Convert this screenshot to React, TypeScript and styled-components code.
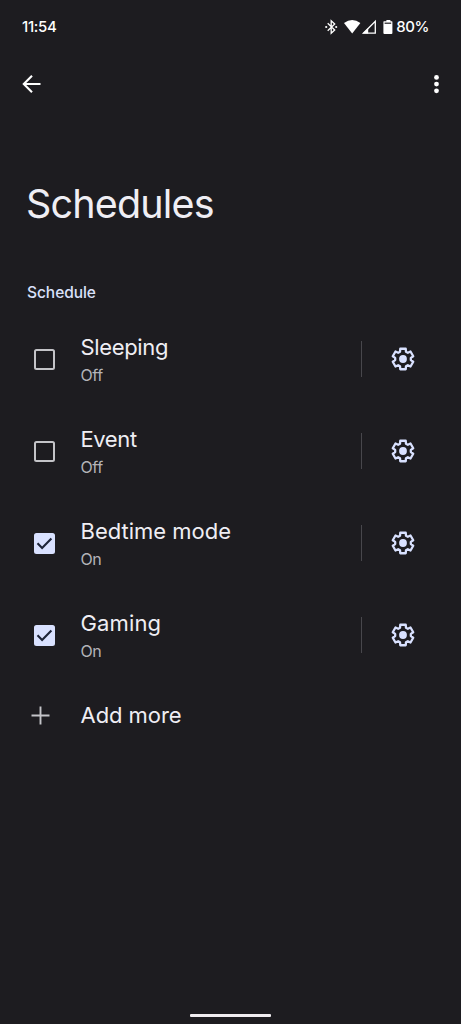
import React from 'react';
import styled, { createGlobalStyle } from 'styled-components';

const GlobalStyle = createGlobalStyle`
  * { box-sizing: border-box; }
  body { margin: 0; background: #1d1c20; }
  svg { display: block; flex: none; }
`;

const Screen = styled.main`
  width: 461px;
  height: 1024px;
  display: flex;
  flex-direction: column;
  overflow: hidden;
  background: #1d1c20;
  color: #efeef4;
  font-family: Inter, Roboto, sans-serif;
`;

const StatusBar = styled.header`
  height: 54px;
  padding: 0 32px 0 22px;
  display: flex;
  align-items: center;
  justify-content: space-between;
  color: #fff;
`;

const StatusText = styled.span<{ $spacing: number }>`
  font-size: 15px;
  line-height: 20px;
  font-weight: 500;
  letter-spacing: ${(p) => p.$spacing}px;
`;

const StatusIcons = styled.div`
  display: flex;
  align-items: center;
`;

const Toolbar = styled.nav`
  height: 60px;
  padding: 0 18px 0 22px;
  display: flex;
  align-items: center;
  justify-content: space-between;
`;

const IconButton = styled.button`
  padding: 0;
  border: 0;
  background: none;
  color: inherit;
`;

const Title = styled.h1`
  margin: 65px 0 0 26px;
  font-size: 39.5px;
  line-height: 50px;
  font-weight: 400;
  letter-spacing: -0.85px;
`;

const SectionLabel = styled.h2`
  margin: 54px 0 0 27px;
  font-size: 15.5px;
  line-height: 20px;
  font-weight: 500;
  letter-spacing: -0.05px;
  color: #d9e0fa;
`;

const List = styled.ul`
  margin: 10px 0 0;
  padding: 0;
  list-style: none;
`;

const Row = styled.li`
  height: 92px;
  padding: 0 46.5px 0 34px;
  display: flex;
  align-items: center;
`;

const CheckBox = styled.span<{ $checked: boolean }>`
  width: 21px;
  height: 21px;
  flex: none;
  border-radius: 2.5px;
  border: 2px solid ${(p) => (p.$checked ? '#d9e1ff' : '#c4c4c8')};
  background: ${(p) => (p.$checked ? '#d9e1ff' : 'transparent')};
  display: grid;
  place-items: center;
`;

const Labels = styled.div`
  flex: 1;
  padding-left: 25.5px;
`;

const Name = styled.div<{ $spacing: number }>`
  font-size: 22px;
  line-height: 30px;
  font-weight: 400;
  letter-spacing: ${(p) => p.$spacing}px;
`;

const State = styled.div`
  font-size: 16px;
  line-height: 22px;
  margin-top: 2px;
  font-weight: 400;
  letter-spacing: -0.4px;
  color: #b4b3b8;
`;

const Divider = styled.span`
  width: 1px;
  height: 36px;
  margin-right: 29px;
  background: #48474c;
`;

const AddRow = styled.div`
  height: 68px;
  padding-left: 31px;
  display: flex;
  align-items: center;
  gap: 30.5px;
`;

const HomeIndicator = styled.div`
  width: 81px;
  height: 3px;
  margin: auto auto 7px 190px;
  border-radius: 1px;
  background: #f0edf0;
`;

const gearPath = (() => {
  const point = (radius: number, degrees: number) => {
    const a = (degrees * Math.PI) / 180;
    return `${(12 + radius * Math.sin(a)).toFixed(2)} ${(12 - radius * Math.cos(a)).toFixed(2)}`;
  };
  const points = [0, 60, 120, 180, 240, 300].flatMap((a) => [
    point(7.9, a - 22),
    point(10.6, a - 15),
    point(10.6, a + 15),
    point(7.9, a + 22),
  ]);
  return `M${points.join('L')}Z`;
})();

const Gear = () => (
  <svg width="24" height="24" viewBox="0 0 24 24" overflow="visible" aria-hidden="true">
    <path d={gearPath} fill="none" stroke="#d9e1ff" strokeWidth="2.3" strokeLinejoin="round" />
    <circle cx="12" cy="12" r="3.9" fill="#d9e1ff" />
  </svg>
);

const Check = () => (
  <svg width="17" height="17" viewBox="0 0 17 17" aria-hidden="true">
    <path d="M1.5 8.3 6.1 12.9 15.4 3.6" fill="none" stroke="#1d2438" strokeWidth="2.1" />
  </svg>
);

const schedules = [
  { name: 'Sleeping', on: false, spacing: -0.35 },
  { name: 'Event', on: false, spacing: -0.4 },
  { name: 'Bedtime mode', on: true, spacing: 0 },
  { name: 'Gaming', on: true, spacing: 0.15 },
];

export default function App() {
  return (
    <Screen>
      <GlobalStyle />
      <StatusBar>
        <StatusText $spacing={-0.3}>11:54</StatusText>
        <StatusIcons>
          <svg width="71" height="16" viewBox="0 0 71 16" aria-hidden="true">
            <path d="M2.7 4.3 9.7 11 6.2 14.2V1.8L9.7 5 2.7 11.7" fill="none" stroke="#fff" strokeWidth="1.3" />
            <circle cx="1.2" cy="8" r="1.1" fill="#fff" />
            <circle cx="11.2" cy="8" r="1.1" fill="#fff" />
            <path d="M19 4Q27.2-2 35.4 4L27.2 14.5Z" fill="#fff" />
            <path d="M50.3 2.3V14.2H38.4Z" fill="none" stroke="#fff" strokeWidth="1.3" />
            <path d="M43.2 9V14.5H37.7Z" fill="#fff" />
            <path d="M60 2.2H61.4V1h4v1.2h1.4q.6 0 .6.6V14q0 1-1 1H59.4q-1 0-1-1V2.8q0-.6.6-.6Z" fill="#fff" />
            <path d="M59.6 4.2H66.2" stroke="#1d1c20" strokeWidth="1.2" />
          </svg>
          <StatusText $spacing={-0.4}>80%</StatusText>
        </StatusIcons>
      </StatusBar>
      <Toolbar>
        <IconButton aria-label="Back">
          <svg width="20" height="20" viewBox="0 0 20 20">
            <path d="M18.5 10H2M10 1.8 1.8 10 10 18.2" fill="none" stroke="#fff" strokeWidth="2.1" />
          </svg>
        </IconButton>
        <IconButton aria-label="More options">
          <svg width="13" height="20" viewBox="0 0 13 20" fill="#fff">
            <circle cx="6.5" cy="3.4" r="2.4" />
            <circle cx="6.5" cy="10.1" r="2.4" />
            <circle cx="6.5" cy="16.8" r="2.4" />
          </svg>
        </IconButton>
      </Toolbar>
      <Title>Schedules</Title>
      <SectionLabel>Schedule</SectionLabel>
      <List>
        {schedules.map((item) => (
          <Row key={item.name}>
            <CheckBox role="checkbox" aria-checked={item.on} $checked={item.on}>
              {item.on && <Check />}
            </CheckBox>
            <Labels>
              <Name $spacing={item.spacing}>{item.name}</Name>
              <State>{item.on ? 'On' : 'Off'}</State>
            </Labels>
            <Divider />
            <IconButton aria-label={`${item.name} settings`}>
              <Gear />
            </IconButton>
          </Row>
        ))}
      </List>
      <AddRow>
        <svg width="19" height="19" viewBox="0 0 19 19" aria-hidden="true">
          <path d="M9.5.5v18M.5 9.5h18" stroke="#c4c4c8" strokeWidth="1.9" />
        </svg>
        <Name $spacing={-0.05}>Add more</Name>
      </AddRow>
      <HomeIndicator />
    </Screen>
  );
}
